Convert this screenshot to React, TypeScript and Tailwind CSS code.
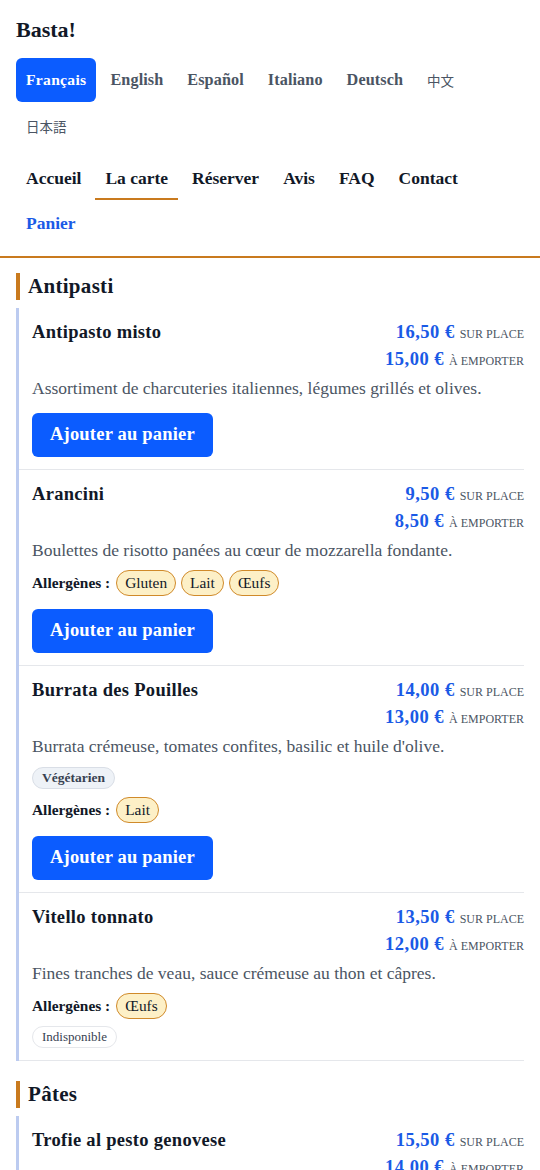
import React from "react";

interface Item {
  name: string;
  onSite: string;
  takeAway: string;
  description: string;
  tags?: string[];
  allergens?: string[];
  available: boolean;
}

interface Section {
  title: string;
  items: Item[];
}

const LANGS = ["Français", "English", "Español", "Italiano", "Deutsch", "中文", "日本語"];
const NAV = ["Accueil", "La carte", "Réserver", "Avis", "FAQ", "Contact"];

const MENU: Section[] = [
  {
    title: "Antipasti",
    items: [
      {
        name: "Antipasto misto",
        onSite: "16,50 €",
        takeAway: "15,00 €",
        description: "Assortiment de charcuteries italiennes, légumes grillés et olives.",
        available: true,
      },
      {
        name: "Arancini",
        onSite: "9,50 €",
        takeAway: "8,50 €",
        description: "Boulettes de risotto panées au cœur de mozzarella fondante.",
        allergens: ["Gluten", "Lait", "Œufs"],
        available: true,
      },
      {
        name: "Burrata des Pouilles",
        onSite: "14,00 €",
        takeAway: "13,00 €",
        description: "Burrata crémeuse, tomates confites, basilic et huile d'olive.",
        tags: ["Végétarien"],
        allergens: ["Lait"],
        available: true,
      },
      {
        name: "Vitello tonnato",
        onSite: "13,50 €",
        takeAway: "12,00 €",
        description: "Fines tranches de veau, sauce crémeuse au thon et câpres.",
        allergens: ["Œufs"],
        available: false,
      },
    ],
  },
  {
    title: "Pâtes",
    items: [
      {
        name: "Trofie al pesto genovese",
        onSite: "15,50 €",
        takeAway: "14,00 €",
        description: "Trofie fraîches, pesto au basilic, pignons et parmesan.",
        tags: ["Végétarien"],
        allergens: ["Gluten", "Lait"],
        available: true,
      },
    ],
  },
];

// one price line: amount + small caps label
const Price = ({ amount, label }: { amount: string; label: string }) => (
  <div className="flex h-6 items-baseline gap-[5px]">
    <span className="text-[18.5px] leading-6 font-bold tracking-[0.5px] text-[#1a5ae6]">{amount}</span>
    <span className="text-[12px] leading-6 uppercase text-[#4b5563]">{label}</span>
  </div>
);

const MenuItem = ({ item }: { item: Item }) => (
  <li className="border-b border-[#e5e7eb] pt-3 pb-3 pl-[13px]">
    <div className="flex items-start justify-between gap-3">
      <h3 className="text-[18.5px] leading-6 font-bold tracking-[0.3px] text-[#111827]">{item.name}</h3>
      <div className="flex flex-col items-end gap-[3px] whitespace-nowrap">
        <Price amount={item.onSite} label="Sur place" />
        <Price amount={item.takeAway} label="À emporter" />
      </div>
    </div>
    <p className="mt-[5px] text-[17.5px] leading-6 text-[#4b5563]">{item.description}</p>
    {item.tags && (
      <div className="mt-[9px] flex flex-wrap gap-1">
        {item.tags.map((t) => (
          <span
            key={t}
            className="flex h-[22px] items-center rounded-full border border-[#d9dee6] bg-[#eef2f7] px-[9px] text-[13.5px] font-bold text-[#374151]"
          >
            {t}
          </span>
        ))}
      </div>
    )}
    {item.allergens && (
      <div className="mt-2 flex flex-wrap items-center gap-[5px]">
        <span className="mr-[1px] text-[15.4px] font-bold text-[#111827]">Allergènes :</span>
        {item.allergens.map((a) => (
          <span
            key={a}
            className="flex h-[26px] items-center rounded-full border border-[#d08a2a] bg-[#fdf0c7] px-[8px] text-[15.4px] text-[#111827]"
          >
            {a}
          </span>
        ))}
      </div>
    )}
    {item.available ? (
      <button className="mt-[13px] flex h-11 items-center rounded-md bg-[#0b5cff] px-[18px] text-[18.5px] font-bold tracking-[0.2px] text-white">
        Ajouter au panier
      </button>
    ) : (
      <div className="mt-[7px] flex">
        <span className="flex h-[22px] items-center rounded-full border border-[#e5e7eb] bg-white px-[9px] text-[13px] text-[#374151]">
          Indisponible
        </span>
      </div>
    )}
  </li>
);

export default function App() {
  return (
    <div className="min-h-screen bg-white font-['Liberation_Serif','Noto_Sans_CJK_JP',serif] text-[#111827]">
      <header className="border-b-2 border-[#c97a1e] px-4 pt-4 pb-[11px]">
        <h1 className="text-[22px] leading-7 font-bold">Basta!</h1>
        <nav className="mt-[14px] flex flex-wrap gap-x-1 gap-y-[2px]">
          {LANGS.map((l, i) => {
            const cjk = i >= 5;
            return (
              <button
                key={l}
                className={
                  i === 0
                    ? "flex h-11 items-center rounded-md bg-[#0b5cff] px-[10px] text-[15.6px] font-bold tracking-[0.3px] text-white"
                    : cjk
                      ? "flex h-11 items-center rounded-md px-[10px] font-['Noto_Sans_CJK_JP',sans-serif] text-[13.5px] text-[#4b5563]"
                      : "flex h-11 items-center rounded-md px-[10px] text-[16.2px] font-bold tracking-[0.1px] text-[#4b5563]"
                }
              >
                {l}
              </button>
            );
          })}
        </nav>
        <nav className="mt-[8px] flex flex-wrap gap-x-1 gap-y-[1px]">
          {NAV.map((n) => (
            <a
              key={n}
              className={
                n === "La carte"
                  ? "flex h-11 items-center border-b-2 border-[#c97a1e] px-[10px] pt-[2px] text-[17.5px] font-bold text-[#111827]"
                  : "flex h-11 items-center border-b-2 border-transparent px-[10px] pt-[2px] text-[17.5px] font-bold text-[#111827]"
              }
            >
              {n}
            </a>
          ))}
          <a className="flex h-11 items-center px-[10px] text-[17.5px] font-bold text-[#1a5ae6]">Panier</a>
        </nav>
      </header>

      <main className="px-4 pt-[15px] pb-8">
        {MENU.map((section, si) => (
          <section key={section.title} className={si > 0 ? "mt-5" : ""}>
            <h2 className="mb-2 border-l-4 border-[#c97a1e] pl-2 text-[21px] leading-[27px] font-bold tracking-[0.3px]">
              {section.title}
            </h2>
            <ul className="border-l-[3px] border-[#bccbf0]">
              {section.items.map((item) => (
                <MenuItem key={item.name} item={item} />
              ))}
            </ul>
          </section>
        ))}
      </main>
    </div>
  );
}
